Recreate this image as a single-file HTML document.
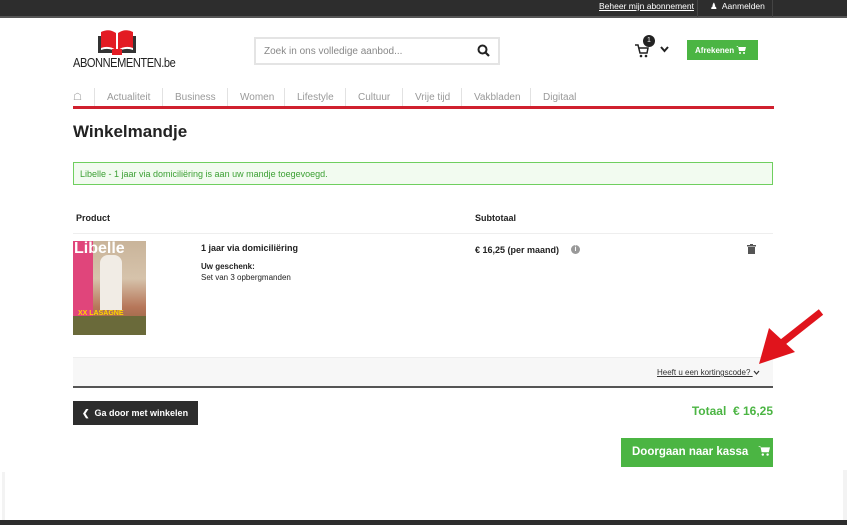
<!DOCTYPE html>
<html><head><meta charset="utf-8"><style>
*{margin:0;padding:0;box-sizing:border-box}
body{width:847px;height:525px;overflow:hidden;background:#fff;font-family:"Liberation Sans",Arial,sans-serif;color:#222;position:relative}
.abs{position:absolute;white-space:nowrap}
.top{left:0;top:0;width:847px;height:18px;background:#2d2d2d;border-bottom:2px solid #555}
.nav span{position:absolute;top:92px;font-size:10px;color:#999}
.sep{position:absolute;top:88px;width:1px;height:18px;background:#e2e2e2}
.green{background:#4bb543;color:#fff;font-weight:bold}
</style></head><body>
<div class="abs top"></div>
<div class="abs" style="left:599px;top:1px;font-size:8.5px;color:#fff;text-decoration:underline">Beheer mijn abonnement</div>
<div class="abs" style="left:697px;top:0;width:1px;height:17px;background:#444"></div>
<div class="abs" style="left:772px;top:0;width:1px;height:17px;background:#444"></div>
<div class="abs" style="left:710px;top:1px;font-size:8.5px;color:#fff">&#9823;&nbsp; Aanmelden</div>
<svg class="abs" style="left:97px;top:28px" width="40" height="28" viewBox="0 0 40 28"><path d="M4 4 Q12 0 19 5 L19 22 Q12 17 4 20Z M21 5 Q28 0 36 4 L36 20 Q28 17 21 22Z" fill="#e31b23"/><path d="M1 8 L4 8 4 22 Q12 19 20 24 Q28 19 36 22 L36 8 39 8 39 25 1 25Z" fill="#333"/><rect x="15" y="21" width="10" height="6" fill="#e31b23"/></svg>
<div class="abs" style="left:73px;top:55px;font-size:13px;letter-spacing:-0.5px;transform:scaleX(.85);transform-origin:left;color:#222">ABONNEMENTEN.be</div>
<div class="abs" style="left:254px;top:37px;width:246px;height:28px;border:2px solid #e4e4e4;font-size:10px;color:#888;padding:7px 8px">Zoek in ons volledige aanbod...</div>
<svg class="abs" style="left:477px;top:44px" width="13" height="13" viewBox="0 0 13 13"><circle cx="5.5" cy="5.5" r="4" fill="none" stroke="#222" stroke-width="2"/><path d="M8.5 8.5 L12 12" stroke="#222" stroke-width="2.2"/></svg>
<svg class="abs" style="left:634px;top:44px" width="16" height="14" viewBox="0 0 16 14"><path d="M1 1 H4 L6 9 H13 L14 4 H5" fill="none" stroke="#222" stroke-width="1.5"/><circle cx="7" cy="12" r="1.3" fill="#222"/><circle cx="12" cy="12" r="1.3" fill="#222"/></svg>
<div class="abs" style="left:643px;top:35px;width:12px;height:12px;border-radius:50%;background:#222;color:#fff;font-size:7px;text-align:center;line-height:12px">1</div>
<svg class="abs" style="left:660px;top:46px" width="9" height="7" viewBox="0 0 9 7"><path d="M1 1 L4.5 5 L8 1" fill="none" stroke="#222" stroke-width="2"/></svg>
<div class="abs green" style="left:687px;top:40px;width:71px;height:20px;font-size:8px;padding:6px 0 0 8px">Afrekenen <svg width="10" height="8" viewBox="0 0 10 8" style="vertical-align:-1px"><path d="M0 0H2L3 5H9L10 1H2" fill="#fff"/><circle cx="4" cy="7" r="1" fill="#fff"/><circle cx="8" cy="7" r="1" fill="#fff"/></svg></div>
<div class="nav">
<span style="left:73px;color:#999">&#9750;</span>
<div class="sep" style="left:94px"></div><span style="left:107px">Actualiteit</span>
<div class="sep" style="left:162px"></div><span style="left:175px">Business</span>
<div class="sep" style="left:227px"></div><span style="left:240px">Women</span>
<div class="sep" style="left:284px"></div><span style="left:297px">Lifestyle</span>
<div class="sep" style="left:345px"></div><span style="left:358px">Cultuur</span>
<div class="sep" style="left:402px"></div><span style="left:415px">Vrije tijd</span>
<div class="sep" style="left:461px"></div><span style="left:474px">Vakbladen</span>
<div class="sep" style="left:530px"></div><span style="left:543px">Digitaal</span>
</div>
<div class="abs" style="left:73px;top:106px;width:701px;height:3px;background:#d0202e"></div>
<div class="abs" style="left:73px;top:122px;font-size:17px;font-weight:bold">Winkelmandje</div>
<div class="abs" style="left:73px;top:162px;width:700px;height:23px;border:1px solid #6fcf5f;background:#f2fbf0;color:#3ca034;font-size:9px;padding:6px 6px">Libelle - 1 jaar via domiciliëring is aan uw mandje toegevoegd.</div>
<div class="abs" style="left:76px;top:213px;font-size:9px;font-weight:bold">Product</div>
<div class="abs" style="left:475px;top:213px;font-size:9px;font-weight:bold">Subtotaal</div>
<div class="abs" style="left:73px;top:233px;width:700px;height:1px;background:#eee"></div>
<div class="abs" style="left:73px;top:241px;width:73px;height:94px;background:linear-gradient(180deg,#c9b49a 0%,#d6c3ab 40%,#b7775a 70%,#8a5c3a 100%)"></div>
<div class="abs" style="left:73px;top:241px;width:20px;height:75px;background:#e0457b"></div>
<div class="abs" style="left:74px;top:240px;font-size:16px;color:#fff;font-weight:bold">Libelle</div>
<div class="abs" style="left:100px;top:255px;width:22px;height:55px;background:#f1ece5;border-radius:8px 8px 0 0"></div>
<div class="abs" style="left:73px;top:316px;width:73px;height:19px;background:#6a6a3a"></div>
<div class="abs" style="left:78px;top:310px;font-size:7px;color:#ffd400;font-weight:bold">XX LASAGNE</div>
<div class="abs" style="left:201px;top:243px;font-size:9px;font-weight:bold">1 jaar via domiciliëring</div>
<div class="abs" style="left:201px;top:262px;font-size:8px;font-weight:bold">Uw geschenk:</div>
<div class="abs" style="left:201px;top:273px;font-size:8px">Set van 3 opbergmanden</div>
<div class="abs" style="left:475px;top:245px;font-size:9px;font-weight:bold">€ 16,25 (per maand)</div>
<div class="abs" style="left:571px;top:245px;width:9px;height:9px;border-radius:50%;background:#999;color:#fff;font-size:7px;text-align:center;line-height:9px;font-weight:bold">i</div>
<svg class="abs" style="left:747px;top:244px" width="9" height="10" viewBox="0 0 9 10"><rect x="0" y="1" width="9" height="1.5" fill="#555"/><rect x="3" y="0" width="3" height="1.5" fill="#555"/><rect x="1" y="3" width="7" height="7" fill="#555"/></svg>
<div class="abs" style="left:73px;top:357px;width:700px;height:31px;background:#f7f7f7;border-top:1px solid #eee;border-bottom:2px solid #555"></div>
<div class="abs" style="left:657px;top:368px;font-size:8px;text-decoration:underline;color:#333">Heeft u een kortingscode? <svg width="7" height="5" viewBox="0 0 7 5"><path d="M1 1 L3.5 4 L6 1" fill="none" stroke="#333" stroke-width="1.2"/></svg></div>
<svg class="abs" style="left:755px;top:308px" width="70" height="60" viewBox="0 0 70 60"><path d="M66 4 L28 34" stroke="#e0141c" stroke-width="7"/><path d="M4 56 L14 20 L40 44Z" fill="#e0141c"/></svg>
<div class="abs" style="left:73px;top:401px;width:125px;height:24px;background:#2d2d2d;color:#fff;font-size:9px;font-weight:bold;padding:7px 0 0 9px">&#10094;&nbsp; Ga door met winkelen</div>
<div class="abs" style="right:74px;top:404px;font-size:12px;font-weight:bold;color:#4bb543">Totaal&nbsp; € 16,25</div>
<div class="abs green" style="left:621px;top:438px;width:152px;height:29px;font-size:11.5px;padding:8px 0 0 11px">Doorgaan naar kassa&nbsp;&nbsp; <svg width="12" height="10" viewBox="0 0 10 8" style="vertical-align:-1px"><path d="M0 0H2L3 5H9L10 1H2" fill="#fff"/><circle cx="4" cy="7" r="1" fill="#fff"/><circle cx="8" cy="7" r="1" fill="#fff"/></svg></div>
<div class="abs" style="left:2px;top:472px;width:3px;height:48px;background:#f3f3f3"></div>
<div class="abs" style="left:843px;top:470px;width:4px;height:50px;background:#f3f3f3"></div>
<div class="abs" style="left:0;top:520px;width:847px;height:5px;background:#2d2d2d"></div>
</body></html>
